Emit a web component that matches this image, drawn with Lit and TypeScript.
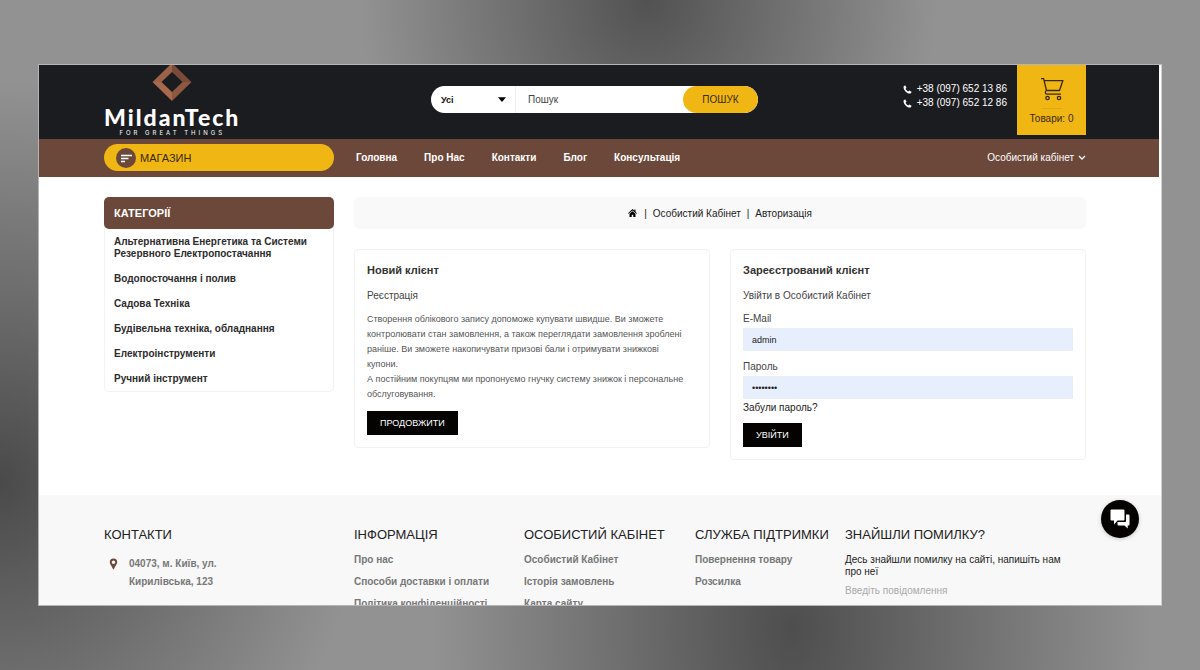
import { LitElement, html, css } from "lit";
import { customElement } from "lit/decorators.js";

const phoneIcon = html`<svg width="9" height="9" viewBox="0 0 16 16" aria-hidden="true">
  <path fill="currentColor" d="M1 2.6C1.6 1.3 3 .7 4.2.8l2 4.1-1.7 1.6c.8 2 2.6 3.9 4.8 5l1.8-1.7 4 2.3c0 1.400-.8 2.500-2 3-1.600.5-3.800 0-6-1.400C3.600 11.400.2 6.200 1 2.600z"/>
</svg>`;

@customElement("shop-header")
class ShopHeader extends LitElement {
  static styles = css`
    :host { display: block; }
    * { box-sizing: border-box; }
    .top {
      display: grid;
      grid-template-columns: 327fr 327fr 328fr;
      height: 74px;
      padding: 0 73px 0 65px;
      background: #1b1c1f;
      color: #fff;
    }
    .logo {
      display: flex;
      flex-direction: column;
      align-items: center;
      justify-self: start;
      color: #fff;
      text-decoration: none;
    }
    .name { margin-top: 2px; font: 900 23px/24px Lato, sans-serif; letter-spacing: 2px; }
    .tagline { font: 400 6px/8px Inter, sans-serif; letter-spacing: 3px; }
    .search {
      display: flex;
      align-self: start;
      height: 27px;
      margin-top: 21px;
      border-radius: 14px;
      background: #fff;
      overflow: hidden;
    }
    .scope { display: flex; align-items: center; width: 85px; border-right: 1px solid #eee; }
    select {
      appearance: none;
      flex: 1;
      min-width: 0;
      height: 100%;
      border: 0;
      padding: 0 0 0 10px;
      background: none;
      color: #111;
      font: 700 9px "Liberation Sans", sans-serif;
    }
    .scope svg { margin-right: 9px; }
    .query {
      flex: 1;
      min-width: 0;
      border: 0;
      padding: 0 12px;
      background: none;
      font: 10px "Liberation Sans", sans-serif;
    }
    .query::placeholder { color: #444; }
    .go {
      width: 75px;
      border: 0;
      border-radius: 14px;
      background: #f0b614;
      color: #3a2a08;
      font: 10px "Liberation Sans", sans-serif;
    }
    .side { display: flex; justify-content: flex-end; gap: 10px; }
    .phones { display: flex; flex-direction: column; margin-top: 17px; }
    .phones a {
      display: flex;
      align-items: center;
      gap: 5px;
      color: #fff;
      font-size: 10px;
      line-height: 14px;
      text-decoration: none;
    }
    .cart {
      display: flex;
      flex-direction: column;
      align-items: center;
      width: 69px;
      height: 70px;
      border: 0;
      padding: 12px 0 0;
      background: #f0b614;
      color: #3a2a08;
      font: 10px/12px "Liberation Sans", sans-serif;
    }
    .cart .rule { width: 20px; height: 1px; margin: 6px 0 4px; background: #dea913; }
    .bar {
      display: grid;
      grid-template-columns: 230fr 732fr;
      column-gap: 20px;
      align-items: center;
      height: 38px;
      padding: 0 73px 1px 65px;
      background: #6c483a;
    }
    .shop {
      display: flex;
      align-items: center;
      gap: 4px;
      height: 27px;
      border: 0;
      border-radius: 14px;
      padding: 0 12px;
      background: #f0b614;
      color: #3a2a08;
      font: 11px "Liberation Sans", sans-serif;
    }
    nav { display: flex; align-items: center; gap: 27px; padding-left: 2px; }
    nav a { color: #fff; font-size: 10px; font-weight: 700; text-decoration: none; white-space: nowrap; }
    .account {
      display: flex;
      align-items: center;
      gap: 4px;
      margin-left: auto;
      border: 0;
      padding: 0;
      background: none;
      color: #fff;
      font: 10px "Liberation Sans", sans-serif;
      white-space: nowrap;
    }
  `;

  render() {
    return html`
      <div class="top">
        <a class="logo" href="#" aria-label="MildanTech">
          <svg width="40" height="38" viewBox="0 0 40 38" aria-hidden="true">
            <path fill="#9a6248" d="M20-2v9L9.500 17H.5z"/>
            <path fill="#7a4b39" d="M20-2v9l10.500 10h9z"/>
            <path fill="#a9694c" d="M.5 17h9L20 27v9z"/>
            <path fill="#8d5740" d="M39.500 17h-9L20 27v9z"/>
          </svg>
          <span class="name">MildanTech</span>
          <span class="tagline">FOR GREAT THINGS</span>
        </a>
        <form class="search" @submit=${(e: Event) => e.preventDefault()}>
          <div class="scope">
            <select aria-label="Категорія"><option>Усі</option></select>
            <svg width="8" height="5" viewBox="0 0 8 5" aria-hidden="true"><path d="M0 .3h8L4 5z"/></svg>
          </div>
          <input class="query" type="text" placeholder="Пошук" aria-label="Пошук" />
          <button class="go">ПОШУК</button>
        </form>
        <div class="side">
          <div class="phones">
            <a href="tel:+380976521386">${phoneIcon}+38 (097) 652 13 86</a>
            <a href="tel:+380976521286">${phoneIcon}+38 (097) 652 12 86</a>
          </div>
          <button class="cart">
            <svg width="24" height="25" viewBox="0 0 24 25" fill="none" stroke="currentColor" stroke-width="1.300" aria-hidden="true">
              <path d="M1 1.700h2.600l2.900 11.800h13L22.800 3.600H4.100M6.500 13.500c-1.600.7-1.600 3.700.6 3.700H21"/>
              <circle cx="7.500" cy="21" r="1.700"/><circle cx="19" cy="21" r="1.700"/>
            </svg>
            <span class="rule"></span>
            <span>Товари: 0</span>
          </button>
        </div>
      </div>
      <div class="bar">
        <button class="shop">
          <svg width="20" height="20" viewBox="0 0 20 20" aria-hidden="true">
            <circle cx="10" cy="10" r="10" fill="#6c483a"/>
            <path d="M5 7.500h11M5 10.500h7.500M5 13.500h4" stroke="#fff" stroke-width="1.300"/>
          </svg>
          МАГАЗИН
        </button>
        <nav>
          ${["Головна", "Про Нас", "Контакти", "Блог", "Консультація"].map((t) => html`<a href="#">${t}</a>`)}
          <button class="account">
            Особистий кабінет
            <svg width="8" height="6" viewBox="0 0 8 6" fill="none" stroke="currentColor" stroke-width="1.300" aria-hidden="true"><path d="M1 1l3 3 3-3"/></svg>
          </button>
        </nav>
      </div>
    `;
  }
}

@customElement("shop-login")
class ShopLogin extends LitElement {
  static styles = css`
    :host {
      display: grid;
      grid-template-columns: 230fr 732fr;
      column-gap: 20px;
      align-items: start;
      padding: 20px 75px 35px 65px;
      color: #444;
      font-size: 10px;
    }
    * { box-sizing: border-box; }
    h2, h3, p, ul { margin: 0; padding: 0; list-style: none; }
    a { color: inherit; text-decoration: none; }
    .categories { border: 1px solid #f2f2f2; border-top: 0; border-radius: 5px; }
    .categories h2 {
      margin: 0 -1px;
      padding: 0 10px;
      border-radius: 5px;
      background: #6c483a;
      color: #fff;
      font-size: 11px;
      line-height: 32px;
    }
    .categories ul { display: flex; flex-direction: column; gap: 13px; padding: 7px 10px 6px 9px; }
    .categories li { color: #2c2c2c; font-weight: 700; line-height: 12px; }
    .crumbs {
      display: flex;
      align-items: center;
      justify-content: center;
      gap: 6px;
      height: 32px;
      border-radius: 5px;
      background: #f9f9f9;
      color: #222;
    }
    .crumbs svg { display: block; margin-right: 1px; fill: #000; }
    .cards {
      display: grid;
      grid-template-columns: 1fr 1fr;
      column-gap: 20px;
      align-items: start;
      margin-top: 20px;
    }
    .card { border: 1px solid #f1f1f1; border-radius: 4px; padding: 13px 12px 12px; }
    .card h3 { color: #333; font-size: 11px; line-height: 14px; }
    .lead { margin-top: 12px; line-height: 14px; }
    .text { margin: 9px 0; padding-right: 10px; color: #555; font-size: 9px; line-height: 15px; }
    .action {
      display: block;
      height: 24px;
      border: 0;
      padding: 0 13px;
      background: #050202;
      color: #fff;
      font: 9px "Liberation Sans", sans-serif;
    }
    .field { display: flex; flex-direction: column; }
    .field label { line-height: 14px; margin: 9px 0 2px; color: #444; }
    .field input {
      height: 23px;
      border: 1px solid #e9eef5;
      padding: 0 8px;
      background: #e7effc;
      color: #222;
      font: 9px "Liberation Sans", sans-serif;
    }
    .forgot { display: block; margin: 2px 0 8px; color: #222; line-height: 14px; }
  `;

  render() {
    return html`
      <aside class="categories">
        <h2>КАТЕГОРІЇ</h2>
        <ul>
          ${[
            "Альтернативна Енергетика та Системи Резервного Електропостачання",
            "Водопосточання і полив",
            "Садова Техніка",
            "Будівельна техніка, обладнання",
            "Електроінструменти",
            "Ручний інструмент",
          ].map((t) => html`<li><a href="#">${t}</a></li>`)}
        </ul>
      </aside>
      <main>
        <div class="crumbs">
          <a href="#" aria-label="Головна"><svg width="9" height="8" viewBox="0 0 18 16" aria-hidden="true"><path d="M9 0l3.800 3.500V1H15v4.600L18 8.500l-1 1.200L9 2.800 1 9.700 0 8.500zM9 4.300l6 5.200V16h-4.500v-4.500h-3V16H3V9.500z"/></svg></a>
          <span>|</span>
          <a href="#">Особистий Кабінет</a>
          <span>|</span>
          <a href="#">Авторизація</a>
        </div>
        <div class="cards">
          <section class="card">
            <h3>Новий клієнт</h3>
            <p class="lead">Реєстрація</p>
            <p class="text">
              Створення облікового запису допоможе купувати швидше. Ви зможете контролювати стан замовлення, а
              також переглядати замовлення зроблені раніше. Ви зможете накопичувати призові бали і отримувати
              знижкові купони.<br />А постійним покупцям ми пропонуємо гнучку систему знижок і персональне
              обслуговування.
            </p>
            <button class="action">ПРОДОВЖИТИ</button>
          </section>
          <form class="card" @submit=${(e: Event) => e.preventDefault()}>
            <h3>Зареєстрований клієнт</h3>
            <p class="lead">Увійти в Особистий Кабінет</p>
            <div class="field">
              <label for="email">E-Mail</label>
              <input id="email" type="text" .value=${"admin"} />
            </div>
            <div class="field">
              <label for="password">Пароль</label>
              <input id="password" type="password" .value=${"password"} />
            </div>
            <a class="forgot" href="#">Забули пароль?</a>
            <button class="action">УВІЙТИ</button>
          </form>
        </div>
      </main>
    `;
  }
}

@customElement("shop-footer")
class ShopFooter extends LitElement {
  static styles = css`
    :host {
      display: grid;
      grid-template-columns: 250fr 170fr 171fr 150fr 241fr;
      padding: 31px 75px 20px 65px;
      background: #f8f8f8;
      font-size: 10px;
    }
    h2, p, ul { margin: 0; padding: 0; list-style: none; }
    h2 { color: #222; font-size: 13px; font-weight: 400; line-height: 18px; white-space: nowrap; }
    a { color: inherit; text-decoration: none; }
    ul { margin-top: 5px; }
    li { color: #777; font-weight: 700; line-height: 22px; white-space: nowrap; }
    address {
      display: flex;
      gap: 11px;
      margin: 11px 0 0 5px;
      color: #777;
      font-style: normal;
      font-weight: 700;
      line-height: 18px;
    }
    address svg { margin-top: 3px; }
    .note { margin-top: 10px; padding-right: 20px; color: #222; line-height: 12px; }
    textarea {
      display: block;
      box-sizing: border-box;
      width: 100%;
      height: 60px;
      margin-top: 6px;
      border: 0;
      padding: 0;
      background: none;
      resize: none;
      font: 10px/14px "Liberation Sans", sans-serif;
    }
    textarea::placeholder { color: #aaa; }
  `;

  render() {
    const column = (title: string, links: string[]) => html`
      <section>
        <h2>${title}</h2>
        <ul>${links.map((t) => html`<li><a href="#">${t}</a></li>`)}</ul>
      </section>`;
    return html`
      <section>
        <h2>КОНТАКТИ</h2>
        <address>
          <svg width="9" height="12" viewBox="0 0 9 12" aria-hidden="true"><path fill="#6c483a" fill-rule="evenodd" d="M4.500.5A3.700 3.700 0 0 0 .8 4.200c0 2 1.700 3 3.200 6.800.2.600.8.600 1 0 1.500-3.800 3.200-4.800 3.200-6.800A3.700 3.700 0 0 0 4.500.5zm0 1.900a1.800 1.800 0 1 1 0 3.600 1.800 1.800 0 0 1 0-3.600z"/></svg>
          <span>04073, м. Київ, ул.<br />Кирилівська, 123</span>
        </address>
      </section>
      ${column("ІНФОРМАЦІЯ", ["Про нас", "Способи доставки і оплати", "Політика конфіденційності"])}
      ${column("ОСОБИСТИЙ КАБІНЕТ", ["Особистий Кабінет", "Історія замовлень", "Карта сайту"])}
      ${column("СЛУЖБА ПІДТРИМКИ", ["Повернення товару", "Розсилка"])}
      <section>
        <h2>ЗНАЙШЛИ ПОМИЛКУ?</h2>
        <p class="note">Десь знайшли помилку на сайті, напишіть нам про неї</p>
        <textarea placeholder="Введіть повідомлення" aria-label="Повідомлення"></textarea>
      </section>
    `;
  }
}

@customElement("app-root")
class AppRoot extends LitElement {
  static styles = css`
    :host {
      display: flex;
      box-sizing: border-box;
      height: 100vh;
      padding: 64px 38px;
      font-family: "Liberation Sans", Arial, sans-serif;
      background:
        radial-gradient(ellipse 24% 45% at 54% 0, #525252 0, #52525200 100%),
        radial-gradient(ellipse 30% 60% at 0 72%, #4a4a4a 0, #5a5a5ac0 40%, #70707000 100%),
        radial-gradient(ellipse 30% 80% at 66% 94%, #4e4e4e 0, #4e4e4e00 100%),
        #929292;
    }
    .window {
      position: relative;
      flex: 1;
      min-width: 0;
      border: 1px solid #b5b5b5;
      border-right-color: #d0d0d0;
      background: #fff;
      overflow: hidden;
    }
    shop-header { margin-right: 2px; }
    .chat {
      position: absolute;
      right: 22px;
      bottom: 67px;
      display: grid;
      place-items: center;
      width: 38px;
      height: 38px;
      border: 0;
      border-radius: 50%;
      padding: 0;
      background: #050202;
      box-shadow: 0 1px 4px #0003;
    }
  `;

  render() {
    return html`
      <div class="window">
        <shop-header></shop-header>
        <shop-login></shop-login>
        <shop-footer></shop-footer>
        <button class="chat" aria-label="Чат">
          <svg width="20" height="20" viewBox="0 0 20 20" fill="#fff" aria-hidden="true">
            <path d="M1.500.5h12a1 1 0 0 1 1 1v9a1 1 0 0 1-1 1H7.500L4 15.500v-4H1.500a1 1 0 0 1-1-1v-9a1 1 0 0 1 1-1z"/>
            <path d="M16 5.500h2.500a1 1 0 0 1 1 1v9a1 1 0 0 1-1 1h-.8V19.500L14.500 16.500h-6a1 1 0 0 1-1-1V13H15a1 1 0 0 0 1-1z"/>
          </svg>
        </button>
      </div>
    `;
  }
}
